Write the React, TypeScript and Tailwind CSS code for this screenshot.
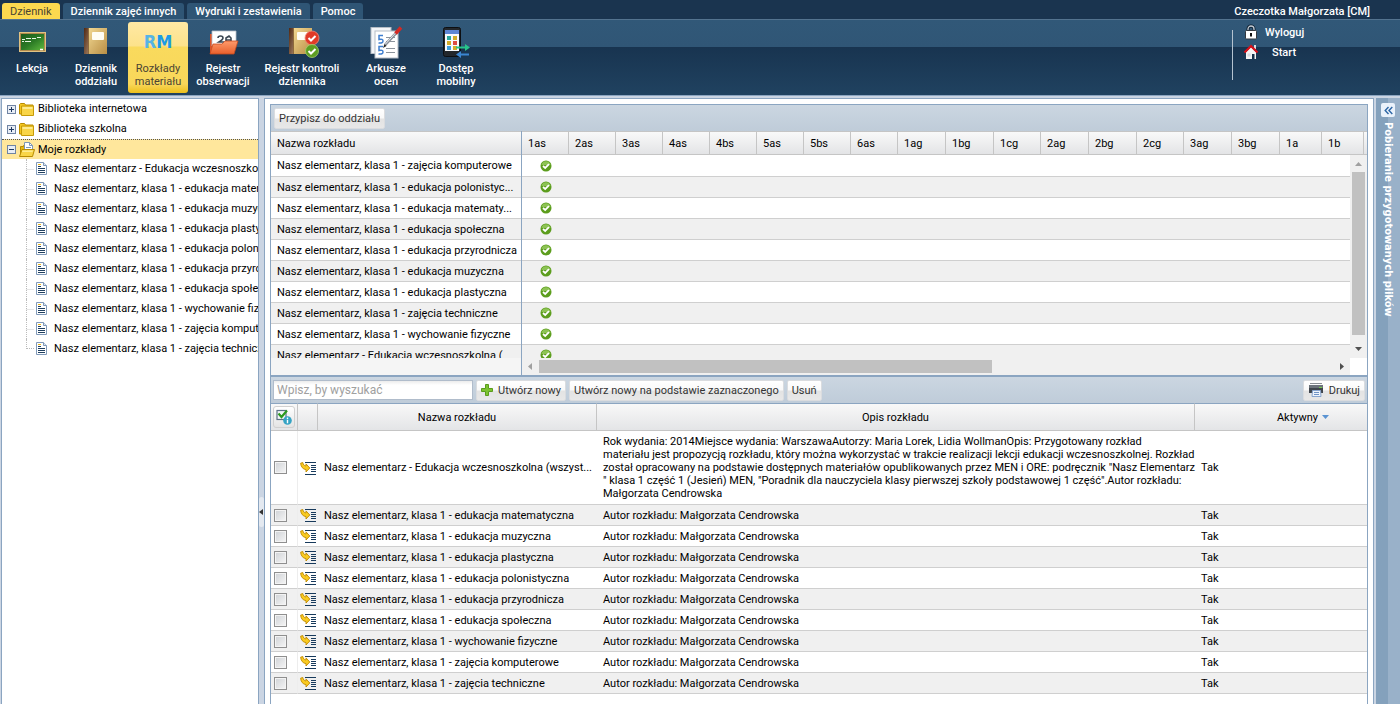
import React, { useState } from "react";

const tabs = ["Dziennik", "Dziennik zajęć innych", "Wydruki i zestawienia", "Pomoc"];

const classColumns = [
  { name: "1as", width: "w-[47px]" },
  { name: "2as", width: "w-[47px]" },
  { name: "3as", width: "w-[47px]" },
  { name: "4as", width: "w-[47px]" },
  { name: "4bs", width: "w-[47px]" },
  { name: "5as", width: "w-[47px]" },
  { name: "5bs", width: "w-[47px]" },
  { name: "6as", width: "w-[47px]" },
  { name: "1ag", width: "w-[48px]" },
  { name: "1bg", width: "w-[48px]" },
  { name: "1cg", width: "w-[47px]" },
  { name: "2ag", width: "w-[48px]" },
  { name: "2bg", width: "w-[48px]" },
  { name: "2cg", width: "w-[47px]" },
  { name: "3ag", width: "w-[48px]" },
  { name: "3bg", width: "w-[48px]" },
  { name: "1a", width: "w-[42px]" },
  { name: "1b", width: "w-[42px]" },
];

const treeItems = [
  "Nasz elementarz - Edukacja wczesnoszkolna",
  "Nasz elementarz, klasa 1 - edukacja matematyczna",
  "Nasz elementarz, klasa 1 - edukacja muzyczna",
  "Nasz elementarz, klasa 1 - edukacja plastyczna",
  "Nasz elementarz, klasa 1 - edukacja polonistyczna",
  "Nasz elementarz, klasa 1 - edukacja przyrodnicza",
  "Nasz elementarz, klasa 1 - edukacja społeczna",
  "Nasz elementarz, klasa 1 - wychowanie fizyczne",
  "Nasz elementarz, klasa 1 - zajęcia komputerowe",
  "Nasz elementarz, klasa 1 - zajęcia techniczne",
];

const assigned = [
  "Nasz elementarz, klasa 1 - zajęcia komputerowe",
  "Nasz elementarz, klasa 1 - edukacja polonistyc...",
  "Nasz elementarz, klasa 1 - edukacja matematy...",
  "Nasz elementarz, klasa 1 - edukacja społeczna",
  "Nasz elementarz, klasa 1 - edukacja przyrodnicza",
  "Nasz elementarz, klasa 1 - edukacja muzyczna",
  "Nasz elementarz, klasa 1 - edukacja plastyczna",
  "Nasz elementarz, klasa 1 - zajęcia techniczne",
  "Nasz elementarz, klasa 1 - wychowanie fizyczne",
  "Nasz elementarz - Edukacja wczesnoszkolna (",
];

const author = "Autor rozkładu: Małgorzata Cendrowska";

const longDescription = [
  "Rok wydania: 2014Miejsce wydania: WarszawaAutorzy: Maria Lorek, Lidia WollmanOpis: Przygotowany rozkład",
  "materiału jest propozycją rozkładu, który można wykorzystać w trakcie realizacji lekcji edukacji wczesnoszkolnej. Rozkład",
  "został opracowany na podstawie dostępnych materiałów opublikowanych przez MEN i ORE: podręcznik \"Nasz Elementarz",
  "\" klasa 1 część 1 (Jesień) MEN, \"Poradnik dla nauczyciela klasy pierwszej szkoły podstawowej 1 część\".Autor rozkładu:",
  "Małgorzata Cendrowska",
];

const schedules = [
  { name: "Nasz elementarz - Edukacja wczesnoszkolna (wszyst...", lines: longDescription },
  { name: "Nasz elementarz, klasa 1 - edukacja matematyczna", lines: [author] },
  { name: "Nasz elementarz, klasa 1 - edukacja muzyczna", lines: [author] },
  { name: "Nasz elementarz, klasa 1 - edukacja plastyczna", lines: [author] },
  { name: "Nasz elementarz, klasa 1 - edukacja polonistyczna", lines: [author] },
  { name: "Nasz elementarz, klasa 1 - edukacja przyrodnicza", lines: [author] },
  { name: "Nasz elementarz, klasa 1 - edukacja społeczna", lines: [author] },
  { name: "Nasz elementarz, klasa 1 - wychowanie fizyczne", lines: [author] },
  { name: "Nasz elementarz, klasa 1 - zajęcia komputerowe", lines: [author] },
  { name: "Nasz elementarz, klasa 1 - zajęcia techniczne", lines: [author] },
];

/* ---------- icons ---------- */

const BoardIcon = () => (
  <svg width="32" height="32" viewBox="0 0 32 32">
    <defs>
      <linearGradient id="board" x1="0" y1="0" x2="1" y2="1">
        <stop offset="0" stopColor="#1d5a1d" />
        <stop offset="0.5" stopColor="#2b7a25" />
        <stop offset="1" stopColor="#5eb93e" />
      </linearGradient>
    </defs>
    <rect x="3" y="6" width="27" height="20" fill="#b08a4c" />
    <rect x="3.5" y="6.5" width="26" height="19" fill="none" stroke="#e0c283" />
    <rect x="5" y="8" width="23" height="16" fill="url(#board)" />
    <path d="M6 13.5h3M10 12.5h5M16 12.5h4M21 11.5h4M6 15.5h2M9 15.5h6" stroke="#e8f6e4" strokeWidth="1" />
    <path d="M24 23.5h3" stroke="#fff" strokeWidth="1.5" />
  </svg>
);

const NotebookShape = () => (
  <>
    <defs>
      <linearGradient id="cover" x1="0" y1="0" x2="1" y2="1">
        <stop offset="0" stopColor="#f3d993" />
        <stop offset="1" stopColor="#b88e45" />
      </linearGradient>
      <linearGradient id="spine" x1="0" y1="0" x2="1" y2="1">
        <stop offset="0" stopColor="#4f2813" />
        <stop offset="1" stopColor="#a58468" />
      </linearGradient>
    </defs>
    <rect x="4" y="2" width="6" height="26" fill="url(#spine)" />
    <path d="M9 2h18v26H8z" fill="url(#cover)" />
    <path d="M8.5 28V2" stroke="#8d6a3c" strokeWidth="1" />
    <rect x="12" y="6" width="12" height="8" rx="1" fill="#fffdf4" />
  </>
);

const NotebookIcon = () => (
  <svg width="32" height="32" viewBox="0 0 32 32">
    <NotebookShape />
  </svg>
);

const NotebookCheckIcon = () => (
  <svg className="overflow-visible" width="32" height="32" viewBox="0 0 32 32">
    <g transform="translate(-1 0)">
      <NotebookShape />
      <circle cx="27" cy="12" r="7" fill="#e03a27" stroke="#f08a78" strokeWidth="0.8" />
      <path d="M23.5 12l2.5 2.5L30.5 10" fill="none" stroke="#fff" strokeWidth="2" />
      <circle cx="27" cy="25" r="6.5" fill="#5d9e22" stroke="#a4cf70" strokeWidth="0.8" />
      <path d="M23.5 25l2.5 2.5L30.5 23" fill="none" stroke="#fff" strokeWidth="2" />
    </g>
  </svg>
);

const RmIcon = () => (
  <span className="flex h-8 items-center justify-center font-['DejaVu_Sans_Condensed',sans-serif] text-[18px] font-bold leading-8 text-[#1c9be6]">
    <span className="text-[#56b4e4]">R</span>M
  </span>
);

const FolderObservationIcon = () => (
  <svg width="32" height="32" viewBox="0 0 32 32">
    <defs>
      <linearGradient id="orangeFolder" x1="0" y1="0" x2="0" y2="1">
        <stop offset="0" stopColor="#ff9a6b" />
        <stop offset="1" stopColor="#e8602c" />
      </linearGradient>
    </defs>
    <path d="M3 8h4v20H3z" fill="#d9542a" />
    <path d="M5 5h24v15H5z" fill="#fff" stroke="#b8bec6" strokeWidth="0.8" />
    <path d="M11 12q0-2 2.5-2t2.5 2q0 1.500-4 4h5M19 17v-5l3-2 2 2v5M19 14h5" fill="none" stroke="#3a4652" strokeWidth="1.6" />
    <path d="M3 28l3-10h9l3-3h13l-4 13z" fill="url(#orangeFolder)" stroke="#c84a1d" strokeWidth="0.8" />
  </svg>
);

const SheetsIcon = () => (
  <svg width="34" height="34" viewBox="0 0 34 34">
    <rect x="2" y="1.5" width="20" height="26" fill="#f3f5f8" stroke="#b5bdc6" />
    <rect x="6" y="5" width="23" height="27" fill="#fff" stroke="#b5bdc6" />
    <path d="M14 9.5H10v4q4-1 4 1.5t-4.5 2M14 20.5H10v4q4-1 4 1.5t-4.5 2" fill="none" stroke="#3f7fd0" strokeWidth="1.5" />
    <path d="M17 11.5h9M17 15.5h9M17 22.5h9M17 26.5h9" stroke="#8b939c" strokeWidth="1" />
    <path d="M16 19l13-14" stroke="#8a9099" strokeWidth="2.6" />
    <path d="M16 18.5l12-13" stroke="#e6e9ed" strokeWidth="1" />
    <path d="M26.5 7.5l5.5-6" stroke="#d42a25" strokeWidth="3.5" />
    <path d="M14 22l3.5-2-2-2z" fill="#222" />
  </svg>
);

const PhoneIcon = () => (
  <svg width="32" height="34" viewBox="0 0 32 34">
    <rect x="3.5" y="1.5" width="17" height="29" rx="2" fill="#23272c" stroke="#0d0f12" />
    <rect x="5" y="4" width="14" height="21" fill="#f8fafc" />
    <rect x="5" y="4" width="14" height="4" fill="#5e86d4" />
    <rect x="7" y="10" width="4" height="4" fill="#2aa7a0" />
    <rect x="13" y="10" width="4" height="4" fill="#d3ac2a" />
    <rect x="7" y="15" width="4" height="4" fill="#d3ac2a" />
    <rect x="13" y="15" width="4" height="4" fill="#df4c43" />
    <rect x="7" y="20" width="4" height="4" fill="#3f9edc" />
    <rect x="13" y="20" width="4" height="4" fill="#d3ac2a" />
    <path d="M16 20.5h9v-2.5l5 3.5-5 3.5v-2.5h-9z" fill="#27c48a" />
    <path d="M29 27.5h-8v-2.5l-5 3.5 5 3.5v-2.5h8z" fill="#3b86d2" />
  </svg>
);

const LockIcon = () => (
  <svg width="16" height="16" viewBox="0 0 16 16">
    <path d="M5 8V5a3 3 0 016 0v3" fill="none" stroke="#0b1c2c" strokeWidth="3" />
    <path d="M5 8V5a3 3 0 016 0v3" fill="none" stroke="#c3ccd6" strokeWidth="1.3" />
    <rect x="2.5" y="6.5" width="11" height="8.5" rx="1" fill="#fff" stroke="#33383e" />
    <path d="M7 9h2v3.5H7z" fill="#111" />
  </svg>
);

const HomeIcon = () => (
  <svg width="16" height="16" viewBox="0 0 16 16">
    <path d="M3 8l5-5 5 5v7H3z" fill="#f4f4f4" />
    <path d="M11 1h2v4h-2z" fill="#d8dde2" />
    <path d="M9 10h2.5v5H9z" fill="#173049" />
    <path d="M4.5 9.5h3v3h-3z" fill="#d5dae0" />
    <path d="M1.5 8.5L8 2l6.5 6.5" fill="none" stroke="#d80f18" strokeWidth="2.2" />
  </svg>
);

const FolderIcon = () => (
  <svg className="shrink-0" width="16" height="16" viewBox="0 0 16 16">
    <path d="M.5 13V3.5l1-1h4l1 1.5h7.5V13z" fill="#f4c61f" stroke="#b88b00" />
    <path d="M2.5 14.5V5h12v9.5z" fill="#f9d548" stroke="#c79b08" />
    <path d="M3.5 6h10v2h-10z" fill="#fdeb91" />
  </svg>
);

const FolderOpenIcon = () => (
  <svg className="shrink-0" width="16" height="16" viewBox="0 0 16 16">
    <path d="M1.5 13V4.5h3v-1h3v2h5V13z" fill="#e9b90e" stroke="#b88b00" />
    <path d="M5.5 9V.5h5l3 3V9z" fill="#fff" stroke="#7d96b5" />
    <path d="M10.5.5v3h3M7 5.5h5" fill="none" stroke="#7d96b5" />
    <path d="M.5 14.5L3 7.5h12.5l-2 7z" fill="#f9d548" stroke="#b88b00" />
    <path d="M3.5 8.5h10.500l-.5 1.5H3z" fill="#fdeb91" />
  </svg>
);

const DocIcon = () => (
  <svg className="shrink-0" width="16" height="16" viewBox="0 0 16 16">
    <path d="M2.500 1.500h7l3 3v9h-10z" fill="#fff" stroke="#8099b8" />
    <path d="M9.500 1.500v3h3" fill="#dfe8f2" stroke="#8099b8" />
    <path d="M4 3.500h3" stroke="#e6b416" />
    <path d="M4 5.500h3M4 7.500h7M4 9.500h7M4 11.500h7" stroke="#203f60" />
  </svg>
);

const ExpanderIcon = ({ open }: { open: boolean }) => (
  <svg className="shrink-0" width="9" height="9" viewBox="0 0 9 9">
    <rect x="0.5" y="0.5" width="8" height="8" fill="#e8edf5" stroke="#7084a3" />
    <path d={open ? "M2 4.5h5" : "M2 4.5h5M4.5 2v5"} stroke="#1f3a63" />
  </svg>
);

const TickIcon = () => (
  <svg className="mx-auto block" width="12" height="12" viewBox="0 0 12 12">
    <circle cx="6" cy="6" r="5.5" fill="#5c9d1d" />
    <path d="M1.5 5a4.6 4.6 0 019 0z" fill="#8dc354" />
    <path d="M3 6l2.2 2L9 4.2" fill="none" stroke="#fff" strokeWidth="1.8" />
  </svg>
);

const PlusIcon = () => (
  <svg width="12" height="12" viewBox="0 0 12 12">
    <path d="M4.5.5h3v4h4v3h-4v4h-3v-4h-4v-3h4z" fill="#7cc331" stroke="#5a9c1c" />
  </svg>
);

const PrinterIcon = () => (
  <svg width="16" height="16" viewBox="0 0 16 16">
    <path d="M2 1.5h12" stroke="#8b8f95" />
    <path d="M1 3h14v3H1z" fill="#6c737b" />
    <path d="M1 6h14v5H1z" fill="#3f454c" />
    <path d="M11 5.5h3" stroke="#76d04a" />
    <path d="M4.5 8.5h8l.5 6h-9z" fill="#eef4fc" stroke="#88a5cf" />
    <path d="M6 10.5h5M6 12.5h5" stroke="#6f93c6" />
  </svg>
);

const GoToIcon = () => (
  <svg className="mx-auto block" width="16" height="16" viewBox="0 0 16 16">
    <path d="M5 2.5h11M11 5.5h5M11 7.5h5M11 9.5h5M11 11.5h5M5 14.5h11" stroke="#173a5c" />
    <path d="M.6 3.2l2.2-.7c.4 2.1 1.4 3.3 3.2 3.5V3.9L9.8 8 6 12V9.6C2.8 9.3 1 6.8.6 3.2z" fill="#f9cb22" stroke="#c08a00" strokeWidth="0.9" />
  </svg>
);

const SelectInfoIcon = () => (
  <svg width="16" height="16" viewBox="0 0 16 16">
    <rect x="1" y="1.5" width="9" height="9" fill="#f2f5f8" stroke="#5c7185" strokeWidth="1.2" />
    <path d="M2.5 4.5l3 3.5L11 1.5" fill="none" stroke="#2c9a1e" strokeWidth="2.2" />
    <circle cx="11.5" cy="11.5" r="4.3" fill="#35a3c4" />
    <path d="M11.5 8.5v1.5M11.5 10.8v3.5" stroke="#fff" strokeWidth="1.4" />
  </svg>
);

/* ---------- ribbon ---------- */

const ribbon = [
  { lines: ["Lekcja"], icon: <BoardIcon />, width: "w-14", gap: "mr-1" },
  { lines: ["Dziennik", "oddziału"], icon: <NotebookIcon />, width: "w-16", gap: "" },
  { lines: ["Rozkłady", "materiału"], icon: <RmIcon />, width: "w-[60px]", gap: "" },
  { lines: ["Rejestr", "obserwacji"], icon: <FolderObservationIcon />, width: "w-[70px]", gap: "" },
  { lines: ["Rejestr kontroli", "dziennika"], icon: <NotebookCheckIcon />, width: "w-[88px]", gap: "" },
  { lines: ["Arkusze", "ocen"], icon: <SheetsIcon />, width: "w-20", gap: "" },
  { lines: ["Dostęp", "mobilny"], icon: <PhoneIcon />, width: "w-[60px]", gap: "" },
];

const Header = () => (
  <header className="h-[95px] shrink-0 bg-[#1a344f] text-white">
    <div className="flex h-[19px] items-end justify-between pl-[2px]">
      <nav className="flex items-end gap-[3px]">
        {tabs.map((tab, i) => (
          <a
            key={tab}
            href="#"
            className={`flex h-4 items-center rounded-t-[3px] px-2 ${
              i === 0 ? "bg-[#fdd94f] text-[#4a4433]" : "bg-[#2f5575] font-medium"
            }`}
          >
            {tab}
          </a>
        ))}
      </nav>
      <span className="pb-px pr-[30px] font-medium">Czeczotka Małgorzata [CM]</span>
    </div>
    <div className="flex h-[76px] justify-between border-t border-[#54738f] bg-[linear-gradient(#315878_0,#305676_27px,#183450_27px,#204260_100%)]">
      <div className="flex pl-1 pt-[2px]">
        {ribbon.map((item, i) => (
          <button
            key={item.lines.join(" ")}
            type="button"
            className={`flex h-[71px] flex-col items-center rounded-[3px] pt-1 leading-[13px] ${item.width} ${item.gap} ${
              i === 2
                ? "bg-[linear-gradient(#ffe9a4_0,#fce28b_24px,#f9da5d_25px,#f8d75a_62px,#edc01c_100%)] text-[#4a4433]"
                : "font-medium"
            }`}
          >
            <span className="flex h-9 items-start justify-center">{item.icon}</span>
            {item.lines.map((line) => (
              <span key={line} className="whitespace-nowrap">{line}</span>
            ))}
          </button>
        ))}
      </div>
      <div className="mb-[15px] mt-[10px] flex w-[168px] items-start border-l border-[#b5c3d0] pl-[10px]">
        <div className="-mt-2 flex flex-col font-medium">
          <a href="#" className="flex h-5 items-center gap-[6px]">
            <LockIcon />
            Wyloguj
          </a>
          <a href="#" className="flex h-5 items-center gap-[13px]">
            <HomeIcon />
            Start
          </a>
        </div>
      </div>
    </div>
  </header>
);

/* ---------- tree ---------- */

const Tree = () => (
  <aside className="w-[258px] shrink-0 overflow-hidden border border-b-0 border-[#8ba5c1] bg-white">
    <ul className="whitespace-nowrap leading-5">
      {["Biblioteka internetowa", "Biblioteka szkolna"].map((name) => (
        <li key={name} className="flex h-5 items-center pl-[5px]">
          <ExpanderIcon open={false} />
          <span className="mx-[3px] flex"><FolderIcon /></span>
          {name}
        </li>
      ))}
      <li>
        <div className="flex h-5 items-center border-t border-dotted border-[#555] bg-[#ffe79c] pl-[5px]">
          <ExpanderIcon open />
          <span className="mx-[3px] flex"><FolderOpenIcon /></span>
          Moje rozkłady
        </div>
        <ul className="ml-[24px]">
          {treeItems.map((name, i) => (
            <li key={name} className="flex h-5 items-center">
              <span
                className={`w-2 shrink-0 border-l border-dotted border-[#bbb] ${
                  i === treeItems.length - 1 ? "h-[10px] self-start border-b" : "h-5 bg-[linear-gradient(to_right,#ccc_50%,transparent_50%)] bg-[length:2px_1px] bg-center bg-repeat-x"
                }`}
              />
              <span className="mr-1 flex"><DocIcon /></span>
              {name}
            </li>
          ))}
        </ul>
      </li>
    </ul>
  </aside>
);

/* ---------- grids ---------- */

interface ToolButtonProps {
  children: React.ReactNode;
  icon?: React.ReactNode;
}

const ToolButton = ({ children, icon }: ToolButtonProps) => (
  <button
    type="button"
    className="flex h-[21px] shrink-0 items-center gap-[5px] whitespace-nowrap rounded-[2px] border border-[#dadcdf] bg-[linear-gradient(#fff_0,#f9f9f9_48%,#e3e3e3_52%,#e8e8e8_100%)] px-1 text-[#333]"
  >
    {icon}
    {children}
  </button>
);

const headerBg = "bg-linear-to-b from-[#f9f9f9] to-[#e3e4e6]";

const AssignmentGrid = () => (
  <section className="border border-[#8ba5c1]">
    <div className="flex h-[26px] items-center bg-linear-to-b from-[#cbd6e1] to-[#bfccd9] px-[3px]">
      <ToolButton>Przypisz do oddziału</ToolButton>
    </div>
    <div className="flex h-[244px]">
      <div className="w-[251px] shrink-0 border-r border-[#8ba5c1] bg-[#f5f5f5]">
        <div className="h-[227px] overflow-hidden">
          <table className="w-full table-fixed border-separate border-spacing-0">
            <thead>
              <tr>
                <th className={`h-6 border-y border-[#c5c5c5] px-[6px] py-0 text-left font-normal ${headerBg}`}>Nazwa rozkładu</th>
              </tr>
            </thead>
            <tbody>
              {assigned.map((name) => (
                <tr key={name} className="odd:bg-white even:bg-[#f0f0f0] first:h-[22px]">
                  <td className="h-[21px] whitespace-nowrap border-b border-[#cfcfcf] py-0 pl-[6px] pr-0">{name}</td>
                </tr>
              ))}
            </tbody>
          </table>
        </div>
      </div>
      <div className="flex min-w-0 flex-1 flex-col">
        <div className={`h-6 shrink-0 overflow-hidden border-y border-[#c5c5c5] ${headerBg}`}>
          <div className="flex">
            {classColumns.map((column) => (
              <div key={column.name} className={`h-[22px] shrink-0 border-r border-[#c5c5c5] pl-[6px] leading-6 ${column.width}`}>
                {column.name}
              </div>
            ))}
          </div>
        </div>
        <div className="flex h-[203px] shrink-0">
          <div className="min-w-0 flex-1 overflow-hidden">
            <table className="w-full table-fixed border-separate border-spacing-0">
              <tbody>
                {assigned.map((name) => (
                  <tr key={name} className="odd:bg-white even:bg-[#f0f0f0] first:h-[22px]">
                    <td className="h-[21px] w-[47px] border-b border-[#cfcfcf] p-0"><TickIcon /></td>
                    <td className="border-b border-[#cfcfcf] p-0" />
                  </tr>
                ))}
              </tbody>
            </table>
          </div>
          <div className="flex w-[17px] shrink-0 flex-col items-center bg-[#f0f0f0] py-[7px]">
            <svg width="7" height="4" viewBox="0 0 7 4"><path d="M0 4l3.5-4L7 4z" fill="#a0a0a0" /></svg>
            <div className="my-[6px] h-[163px] w-[13px] bg-[#c1c1c1]" />
            <svg className="mt-[6px]" width="7" height="4" viewBox="0 0 7 4"><path d="M0 0l3.5 4L7 0z" fill="#505050" /></svg>
          </div>
        </div>
        <div className="flex h-[17px] shrink-0">
          <div className="flex flex-1 items-center bg-[#f0f0f0] px-[6px]">
            <svg width="4" height="7" viewBox="0 0 4 7"><path d="M4 0L0 3.5 4 7z" fill="#a0a0a0" /></svg>
            <div className="ml-[7px] h-[13px] w-[453px] bg-[#c1c1c1]" />
            <svg className="ml-auto" width="4" height="7" viewBox="0 0 4 7"><path d="M0 0l4 3.5L0 7z" fill="#505050" /></svg>
          </div>
          <div className="w-[17px] bg-white" />
        </div>
      </div>
    </div>
  </section>
);

const ScheduleGrid = () => {
  const [checked, setChecked] = useState<string[]>([]);

  const toggle = (name: string) =>
    setChecked((prev) => (prev.includes(name) ? prev.filter((n) => n !== name) : [...prev, name]));

  return (
    <section className="min-h-0 flex-1 border-x border-t border-[#8ba5c1] bg-white">
      <div className="flex h-[26px] items-center gap-[3px] bg-linear-to-b from-[#cbd6e1] to-[#bfccd9] px-[2px]">
        <input
          type="text"
          aria-label="Szukaj"
          placeholder="Wpisz, by wyszukać"
          className="h-5 w-[200px] border border-[#b0bccb] bg-[linear-gradient(#ececec_0,#fff_4px)] px-[3px] text-[12px] outline-none placeholder:text-[#a0a0a0]"
        />
        <ToolButton icon={<PlusIcon />}>Utwórz nowy</ToolButton>
        <ToolButton>Utwórz nowy na podstawie zaznaczonego</ToolButton>
        <ToolButton>Usuń</ToolButton>
        <span className="ml-auto flex">
          <ToolButton icon={<PrinterIcon />}>Drukuj</ToolButton>
        </span>
      </div>
      <table className="w-full table-fixed border-separate border-spacing-0">
        <thead>
          <tr className={headerBg}>
            <th className="h-7 w-[27px] border-b border-r border-t border-[#c5c5c5] border-t-[#8ba5c1] p-0">
              <button
                type="button"
                aria-label="Zaznacz"
                className="ml-[2px] flex h-[22px] w-[22px] items-center justify-center rounded-[3px] border border-[#d0d0d0] bg-linear-to-b from-white to-[#e4e4e4]"
              >
                <SelectInfoIcon />
              </button>
            </th>
            <th className="w-5 border-b border-r border-t border-[#c5c5c5] border-t-[#8ba5c1] p-0" />
            <th className="w-[279px] border-b border-r border-t border-[#c5c5c5] border-t-[#8ba5c1] p-0 font-normal">Nazwa rozkładu</th>
            <th className="border-b border-r border-t border-[#c5c5c5] border-t-[#8ba5c1] p-0 font-normal">Opis rozkładu</th>
            <th className="w-[172px] border-b border-t border-[#c5c5c5] border-t-[#8ba5c1] py-0 pl-11 pr-0 font-normal">
              <span className="inline-flex items-center gap-1">
                Aktywny
                <svg width="7" height="4" viewBox="0 0 7 4"><path d="M0 0h7L3.5 4z" fill="#5a93d2" /></svg>
              </span>
            </th>
          </tr>
        </thead>
        <tbody>
          {schedules.map((row) => (
            <tr key={row.name} className="odd:bg-white even:bg-[#f0f0f0]">
              <td className="border-b border-r border-[#cfcfcf] border-r-[#ededed] p-0">
                <input
                  type="checkbox"
                  aria-label={row.name}
                  checked={checked.includes(row.name)}
                  onChange={() => toggle(row.name)}
                  className="ml-[3px] block h-[13px] w-[13px] appearance-none border border-[#8f8f8f] bg-linear-to-br from-[#cfd2d6] to-[#f6f6f6] shadow-[inset_0_0_0_1px_#f4f4f4] checked:bg-[#4a7fb5]"
                />
              </td>
              <td className="border-b border-[#cfcfcf] p-0"><GoToIcon /></td>
              <td className="whitespace-nowrap border-b border-[#cfcfcf] py-0 pl-[6px] pr-0">{row.name}</td>
              <td className={`whitespace-nowrap border-b border-[#cfcfcf] pl-[6px] pr-0 leading-[13px] ${row.lines.length > 1 ? "py-1" : "h-[21px] py-0"}`}>
                {row.lines.map((line) => (
                  <div key={line}>{line}</div>
                ))}
              </td>
              <td className="border-b border-[#cfcfcf] py-0 pl-[6px] pr-0">Tak</td>
            </tr>
          ))}
        </tbody>
      </table>
    </section>
  );
};

const App: React.FC = () => (
  <div className="flex h-screen flex-col overflow-hidden bg-[#cbd5e3] font-['Roboto',sans-serif] text-[11px] leading-[13px] text-black">
    <Header />
    <div className="flex min-h-0 flex-1 border-t border-[#8ba5c1] pl-px pt-[2px]">
      <Tree />
      <div className="flex w-[5px] shrink-0 items-center">
        <button type="button" aria-label="Zwiń panel" className="mt-[222px] flex h-[30px] w-[5px] items-center rounded bg-[#e4e9f0]">
          <svg width="4" height="6" viewBox="0 0 4 6"><path d="M4 0L0 3l4 3z" fill="#333" /></svg>
        </button>
      </div>
      <main className="flex min-w-0 flex-1 flex-col border border-b-0 border-[#8ba5c1] bg-white px-[5px] pt-[5px]">
        <AssignmentGrid />
        <ScheduleGrid />
      </main>
      <aside className="ml-[2px] flex w-6 shrink-0 flex-col items-center bg-linear-to-r from-[#84a1bc] from-50% to-[#99b1c9] to-50% pt-[5px]">
        <button type="button" aria-label="Rozwiń panel" className="flex h-[14px] w-[14px] items-center justify-center rounded-[2px] bg-[#eaf2fb]">
          <svg width="9" height="9" viewBox="0 0 9 9"><path d="M4.5 1L1.2 4.5l3.3 3.5M8.3 1L5 4.5 8.3 8" fill="none" stroke="#2c66a5" strokeWidth="1.4" /></svg>
        </button>
        <span className="mt-[5px] whitespace-nowrap font-['DejaVu_Sans_Condensed',sans-serif] font-bold text-white [writing-mode:vertical-rl]">
          Pobieranie przygotowanych plików
        </span>
      </aside>
    </div>
  </div>
);

export default App;
